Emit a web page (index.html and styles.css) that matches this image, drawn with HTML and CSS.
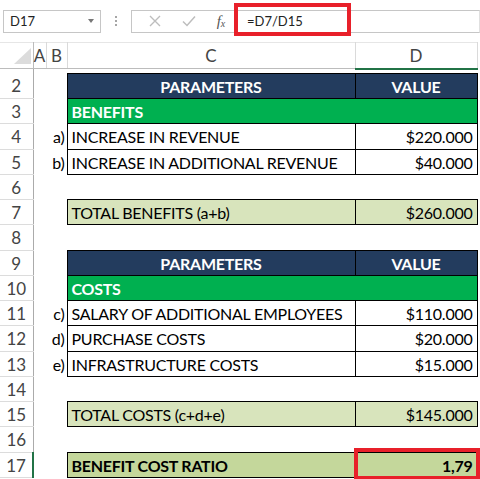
FILE: index.html
```html
<!DOCTYPE html>
<html>
<head>
<meta charset="utf-8">
<link rel="stylesheet" href="styles.css">
</head>
<body>
<div class="fbar">
  <div class="namebox"><span>D17</span><span class="drop"></span></div>
  <div class="grip"><i></i><i></i><i></i></div>
  <div class="controls">
    <svg class="ic" width="14" height="14" viewBox="0 0 14 14"><path d="M2 2 L12 12 M12 2 L2 12" stroke="#bdbdbd" stroke-width="1.4" fill="none"/></svg>
    <svg class="ic" width="16" height="14" viewBox="0 0 16 14"><path d="M2 7.5 L6 11.5 L14 2.5" stroke="#bdbdbd" stroke-width="1.5" fill="none"/></svg>
    <span class="fx">f<sub>x</sub></span>
  </div>
  <div class="formula"><span class="ftext">=D7/D15</span><span class="mark"></span></div>
</div>

<table class="sheet">
  <colgroup>
    <col class="w-hdr"><col class="w-a"><col class="w-b"><col class="w-c"><col class="w-d">
  </colgroup>
  <thead>
    <tr class="colhdr">
      <th class="corner"><span class="tri"></span></th>
      <th>A</th><th>B</th><th>C</th><th class="sel">D</th>
    </tr>
  </thead>
  <tbody>
    <tr class="r-hidden"><th class="rh"></th><td></td><td></td><td></td><td></td></tr>
    <tr><th class="rh">2</th><td></td><td></td><td class="box head">PARAMETERS</td><td class="box head">VALUE</td></tr>
    <tr><th class="rh">3</th><td></td><td></td><td class="box grp" colspan="2">BENEFITS</td></tr>
    <tr class="tall"><th class="rh">4</th><td></td><td class="lbl">a)</td><td class="box">INCREASE IN REVENUE</td><td class="box num">$220.000</td></tr>
    <tr><th class="rh">5</th><td></td><td class="lbl">b)</td><td class="box">INCREASE IN ADDITIONAL REVENUE</td><td class="box num">$40.000</td></tr>
    <tr><th class="rh">6</th><td></td><td></td><td></td><td></td></tr>
    <tr><th class="rh">7</th><td></td><td></td><td class="box total">TOTAL BENEFITS (a+b)</td><td class="box total num">$260.000</td></tr>
    <tr class="tall"><th class="rh">8</th><td></td><td></td><td></td><td></td></tr>
    <tr><th class="rh">9</th><td></td><td></td><td class="box head">PARAMETERS</td><td class="box head">VALUE</td></tr>
    <tr><th class="rh">10</th><td></td><td></td><td class="box grp" colspan="2">COSTS</td></tr>
    <tr><th class="rh">11</th><td></td><td class="lbl">c)</td><td class="box">SALARY OF ADDITIONAL EMPLOYEES</td><td class="box num">$110.000</td></tr>
    <tr class="tall"><th class="rh">12</th><td></td><td class="lbl">d)</td><td class="box">PURCHASE COSTS</td><td class="box num">$20.000</td></tr>
    <tr><th class="rh">13</th><td></td><td class="lbl">e)</td><td class="box">INFRASTRUCTURE COSTS</td><td class="box num">$15.000</td></tr>
    <tr><th class="rh">14</th><td></td><td></td><td></td><td></td></tr>
    <tr><th class="rh">15</th><td></td><td></td><td class="box total">TOTAL COSTS (c+d+e)</td><td class="box total num">$145.000</td></tr>
    <tr class="tall"><th class="rh">16</th><td></td><td></td><td></td><td></td></tr>
    <tr><th class="rh cur">17</th><td></td><td></td><td class="box ratio">BENEFIT COST RATIO</td><td class="box ratio num picked">1,79</td></tr>
  </tbody>
</table>
</body>
</html>
```
FILE: styles.css
```css
html, body {
  margin: 0;
  padding: 0;
  background: #fff;
  overflow: hidden;
}
body {
  width: 480px;
  height: 479px;
  font-family: Lato, "Open Sans", sans-serif;
  color: #000;
}

/* formula bar */
.fbar {
  display: flex;
  align-items: center;
  height: 42px;
  padding-left: 3px;
  box-sizing: border-box;
}
.namebox {
  width: 98px;
  height: 23px;
  box-sizing: border-box;
  border: 1px solid #c6c6c6;
  display: flex;
  align-items: center;
  justify-content: space-between;
  padding: 0 6px 0 6px;
  font-size: 13px;
  color: #222;
}
.drop {
  width: 0;
  height: 0;
  border-left: 3.5px solid transparent;
  border-right: 3.5px solid transparent;
  border-top: 4px solid #777;
}
.grip {
  width: 30px;
  display: flex;
  flex-direction: column;
  align-items: center;
  gap: 2px;
}
.grip i {
  display: block;
  width: 2px;
  height: 2px;
  background: #a6a6a6;
}
.controls {
  width: 104px;
  height: 23px;
  box-sizing: border-box;
  border: 1px solid #c6c6c6;
  border-right: none;
  display: flex;
  align-items: center;
  justify-content: space-around;
  padding-left: 6px;
}
.fx {
  font-family: "Liberation Serif", serif;
  font-style: italic;
  font-size: 15px;
  color: #555;
}
.fx sub {
  font-size: 10px;
  vertical-align: -1px;
}
.formula {
  position: relative;
  flex: 1;
  height: 23px;
  box-sizing: border-box;
  border: 1px solid #c6c6c6;
  border-right-color: #e0e0e0;
  display: flex;
  align-items: center;
  padding-left: 11px;
  font-size: 13px;
  color: #222;
}
.mark {
  position: absolute;
  left: -2px;
  top: -8px;
  width: 117px;
  height: 33px;
  box-sizing: border-box;
  border: 4px solid #e8202a;
}

/* sheet */
.sheet {
  border-collapse: collapse;
  table-layout: fixed;
  width: 477px;
}
.w-hdr { width: 33px; }
.w-a { width: 13px; }
.w-b { width: 21px; }
.w-c { width: 288px; }
.w-d { width: 122px; }

.colhdr { height: 26px; }
.colhdr th {
  font-weight: normal;
  font-size: 17px;
  color: #444;
  border-top: 1px solid #e6e6e6;
  border-right: 1px solid #dadada;
  border-bottom: 1px solid #bcbcbc;
  padding: 0;
  text-align: center;
  vertical-align: middle;
}
.colhdr th.sel {
  border-bottom: 2px solid #217346;
  border-right: 1px solid #dadada;
}
.colhdr th.corner {
  position: relative;
  border-right: 1px solid #bcbcbc;
}
.tri {
  position: absolute;
  right: 2px;
  bottom: 4px;
  width: 0;
  height: 0;
  border-left: 17px solid transparent;
  border-bottom: 16px solid #dcdcdc;
}

tbody tr { height: 25px; }
tbody tr.tall { height: 26px; }
tbody tr.r-hidden { height: 5px; }

td {
  padding: 0 4px;
  font-size: 16px;
  letter-spacing: -0.25px;
  white-space: nowrap;
  overflow: hidden;
  vertical-align: middle;
}
th.rh {
  padding: 0;
  font-weight: normal;
  font-size: 17px;
  color: #444;
  text-align: center;
  border-right: 1px solid #ababab;
  border-bottom: 1px solid #dcdcdc;
}
.r-hidden th.rh { border-bottom: none; }
th.rh.cur {
  border-right: 2px solid #217346;
}

td.lbl {
  padding: 0 2px 0 0;
  text-align: right;
}
td.box { border: 1px solid #000; }
td.num { text-align: right; }
td.head {
  background: #233c5e;
  color: #fff;
  font-weight: bold;
  text-align: center;
}
td.grp {
  background: #00b050;
  color: #fff;
  font-weight: bold;
}
td.total { background: #d8e4bc; }
td.ratio {
  background: #c4d79b;
  font-weight: bold;
}
td.picked {
  position: relative;
  overflow: visible;
}
td.picked::after {
  content: "";
  position: absolute;
  left: -2px;
  top: -5px;
  right: -3px;
  bottom: -3px;
  border: 4px solid #e8202a;
}
```
